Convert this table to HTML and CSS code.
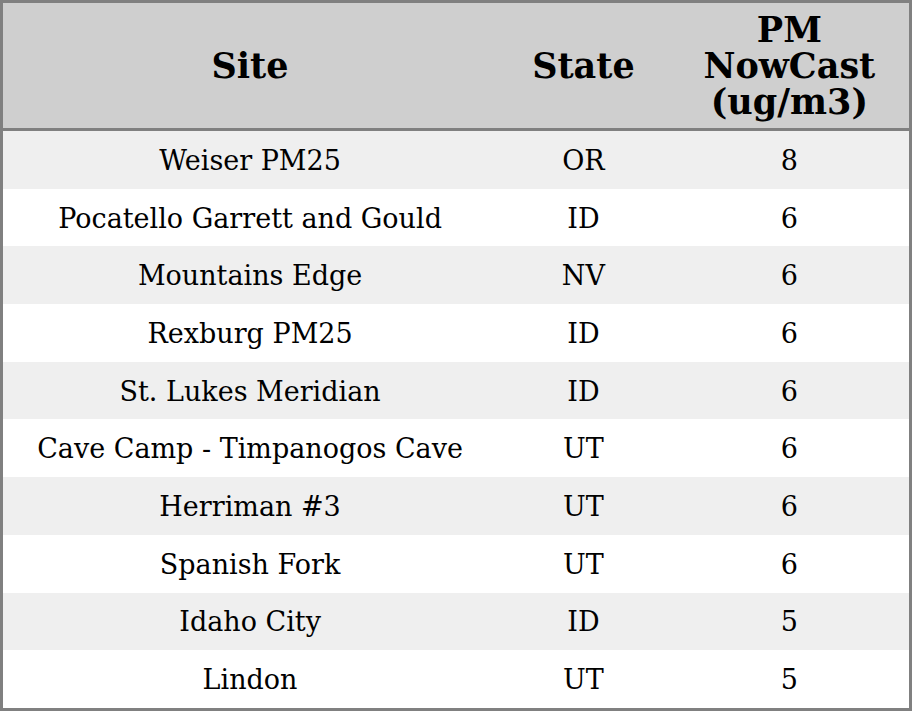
FILE: index.html
```html
<!DOCTYPE html>
<html>
<head>
<meta charset="utf-8">
<link rel="stylesheet" href="styles.css">
</head>
<body>
<table class="aq-table">
  <colgroup>
    <col class="col-site">
    <col class="col-state">
    <col class="col-pm">
  </colgroup>
  <thead>
    <tr class="head-row">
      <th>Site</th>
      <th>State</th>
      <th>PM<br>NowCast<br>(ug/m3)</th>
    </tr>
  </thead>
  <tbody>
    <tr class="odd"><td>Weiser PM25</td><td>OR</td><td>8</td></tr>
    <tr><td>Pocatello Garrett and Gould</td><td>ID</td><td>6</td></tr>
    <tr class="odd"><td>Mountains Edge</td><td>NV</td><td>6</td></tr>
    <tr><td>Rexburg PM25</td><td>ID</td><td>6</td></tr>
    <tr class="odd"><td>St. Lukes Meridian</td><td>ID</td><td>6</td></tr>
    <tr><td>Cave Camp - Timpanogos Cave</td><td>UT</td><td>6</td></tr>
    <tr class="odd"><td>Herriman #3</td><td>UT</td><td>6</td></tr>
    <tr><td>Spanish Fork</td><td>UT</td><td>6</td></tr>
    <tr class="odd"><td>Idaho City</td><td>ID</td><td>5</td></tr>
    <tr><td>Lindon</td><td>UT</td><td>5</td></tr>
  </tbody>
</table>
</body>
</html>
```
FILE: styles.css
```css
html, body {
  margin: 0;
  padding: 0;
  background: #ffffff;
}
.aq-table {
  width: 912px;
  border-collapse: collapse;
  border: 3px solid #808080;
  table-layout: fixed;
  font-family: "DejaVu Serif", serif;
  color: #000000;
}
.col-site { width: 494px; }
.col-state { width: 172px; }
.col-pm { width: 240px; }
.head-row th {
  background: #cfcfcf;
  font-weight: bold;
  font-size: 35px;
  line-height: 36px;
  height: 125px;
  padding: 0;
  text-align: center;
  vertical-align: middle;
  border-bottom: 3px solid #808080;
}
tbody td {
  font-size: 27px;
  line-height: 30px;
  height: 55.7px;
  padding: 2px 0 0 0;
  text-align: center;
  vertical-align: middle;
}
tbody tr.odd td {
  background: #efefef;
}
```
